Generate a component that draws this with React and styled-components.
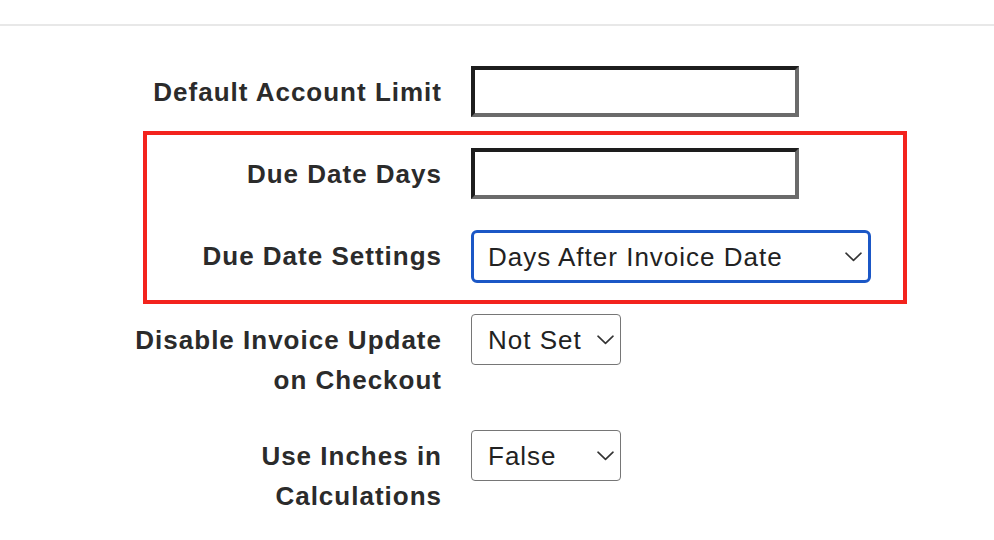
import * as React from 'react';
import styled, { createGlobalStyle } from 'styled-components';

const GlobalStyle = createGlobalStyle`
  html, body {
    margin: 0;
    padding: 0;
    background: #ffffff;
  }

  body {
    font-family: 'Liberation Sans', Arial, Helvetica, sans-serif;
    color: #2b2b2b;
  }
`;

const Page = styled.div`
  width: 994px;
  min-height: 540px;
  box-sizing: border-box;
  overflow: hidden;
`;

const TopBar = styled.div`
  height: 24px;
  border-bottom: 2px solid #e8e8e8;
`;

const Form = styled.form`
  display: flex;
  flex-direction: column;
  width: 777px;
  margin-left: 120px;
  padding-top: 40px;
`;

const Row = styled.div`
  display: grid;
  grid-template-columns: 321px auto;
  column-gap: 30px;
  align-items: start;
  margin-bottom: ${props => props.$gap || 0}px;
`;

const Highlight = styled.div`
  width: 764px;
  box-sizing: border-box;
  margin: 0 0 10px 23px;
  padding: 13px 0 17px;
  border: 4px solid #f3231d;

  & > ${Row} {
    margin-left: -27px;
  }
`;

const Label = styled.label`
  padding-top: 6px;
  margin-right: -1px;
  font-size: 26px;
  font-weight: 700;
  letter-spacing: 1px;
  line-height: 40px;
  text-align: right;
  color: #2b2b2b;
`;

const TextInput = styled.input`
  width: 328px;
  height: 51px;
  box-sizing: border-box;
  margin: 0;
  padding: 0 10px;
  border-style: solid;
  border-width: 4px;
  border-color: #1d1d1d #6b6b6b #6b6b6b #1d1d1d;
  background: #ffffff;
  font: 26px 'Liberation Sans', Arial, sans-serif;
  outline: none;
`;

const SelectBox = styled.div`
  display: flex;
  align-items: center;
  justify-content: space-between;
  width: ${props => props.$width}px;
  height: ${props => (props.$focused ? 53 : 51)}px;
  box-sizing: border-box;
  padding: 0 6px 0 ${props => (props.$focused ? 14 : 16)}px;
  border: ${props => (props.$focused ? '3px solid #1b57c6' : '1px solid #767676')};
  border-radius: ${props => (props.$focused ? 6 : 4)}px;
  background: #ffffff;
  cursor: default;
`;

const SelectValue = styled.span`
  font-size: 26px;
  letter-spacing: 1px;
  line-height: 1;
  color: #222222;
  white-space: nowrap;
`;

const Chevron = () => (
  <svg width="17" height="10" viewBox="0 0 17 10" fill="none">
    <path d="M1 1.2 L8.5 8.4 L16 1.2" stroke="#333333" strokeWidth="1.6" strokeLinecap="round" strokeLinejoin="round" />
  </svg>
);

const Select = ({ value, width, focused }) => (
  <SelectBox $width={width} $focused={focused}>
    <SelectValue>{value}</SelectValue>
    <Chevron />
  </SelectBox>
);

export default function App() {
  return (
    <Page>
      <GlobalStyle />
      <TopBar />
      <Form onSubmit={e => e.preventDefault()}>
        <Row $gap={14}>
          <Label>Default Account Limit</Label>
          <TextInput type="text" />
        </Row>
        <Highlight>
          <Row $gap={31}>
            <Label>Due Date Days</Label>
            <TextInput type="text" />
          </Row>
          <Row>
            <Label>Due Date Settings</Label>
            <Select value="Days After Invoice Date" width={400} focused />
          </Row>
        </Highlight>
        <Row $gap={30}>
          <Label>
            Disable Invoice Update
            <br />
            on Checkout
          </Label>
          <Select value="Not Set" width={150} />
        </Row>
        <Row>
          <Label>
            Use Inches in
            <br />
            Calculations
          </Label>
          <Select value="False" width={150} />
        </Row>
      </Form>
    </Page>
  );
}
